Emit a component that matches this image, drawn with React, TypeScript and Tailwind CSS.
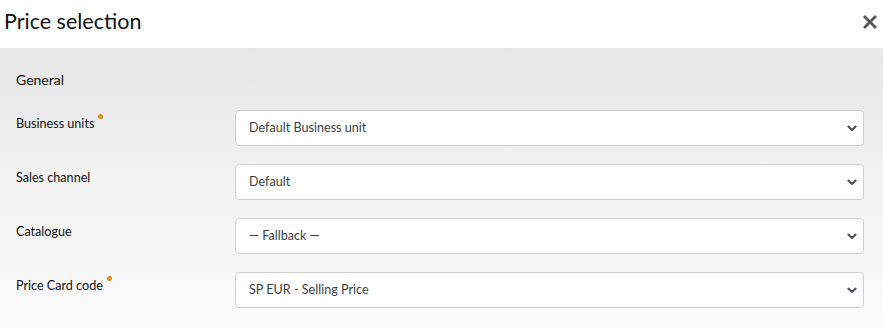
import React from "react";

const Chevron = () => (
  <svg width="10" height="7" viewBox="0 0 10 7" className="shrink-0">
    <path d="M1.4 1.6 L5 5 L8.6 1.6" fill="none" stroke="#4a4f57" strokeWidth="2.1" strokeLinecap="round" strokeLinejoin="round" />
  </svg>
);

const Row = ({ label, value, required }: { label: string; value: string; required?: boolean }) => (
  <div className="flex items-start">
    <div className="w-[219px] shrink-0 pt-[5px] text-[12.6px] leading-[18px] text-[#111]">
      <span className="relative">
        {label}
        {required && (
          <span className="absolute -right-[9px] -top-[2px] h-[5px] w-[5px] rounded-full bg-[#e58b25]" />
        )}
      </span>
    </div>
    <div className="flex h-9 flex-1 items-center justify-between rounded-[4px] border border-[#cfcfcf] bg-white pl-[13px] pr-[6px] text-[12.6px] text-[#3a3f47]">
      <span>{value}</span>
      <Chevron />
    </div>
  </div>
);

export default function App() {
  return (
    <div className="w-[883px] h-[327px] overflow-hidden bg-white" style={{ fontFamily: "Lato, 'Open Sans', sans-serif" }}>
      <div className="flex h-12 items-center justify-between pl-1 pr-[6px] pb-[4px]">
        <h1 className="text-[21.5px] leading-none text-[#111]">Price selection</h1>
        <svg width="14" height="14" viewBox="0 0 14 14">
          <path d="M2 2 L12 12 M12 2 L2 12" stroke="#555" strokeWidth="2.8" strokeLinecap="square" />
        </svg>
      </div>
      <div className="h-[279px] bg-gradient-to-b from-[#e6e6e6] via-[#f3f3f3] to-[#fbfbfb] pl-4 pr-[19px] pt-[22px]">
        <div className="mb-[20px] text-[14px] leading-5 text-[#111]">General</div>
        <div className="flex flex-col gap-[18px]">
          <Row label="Business units" value="Default Business unit" required />
          <Row label="Sales channel" value="Default" />
          <Row label="Catalogue" value="— Fallback —" />
          <Row label="Price Card code" value="SP EUR - Selling Price" required />
        </div>
      </div>
    </div>
  );
}
